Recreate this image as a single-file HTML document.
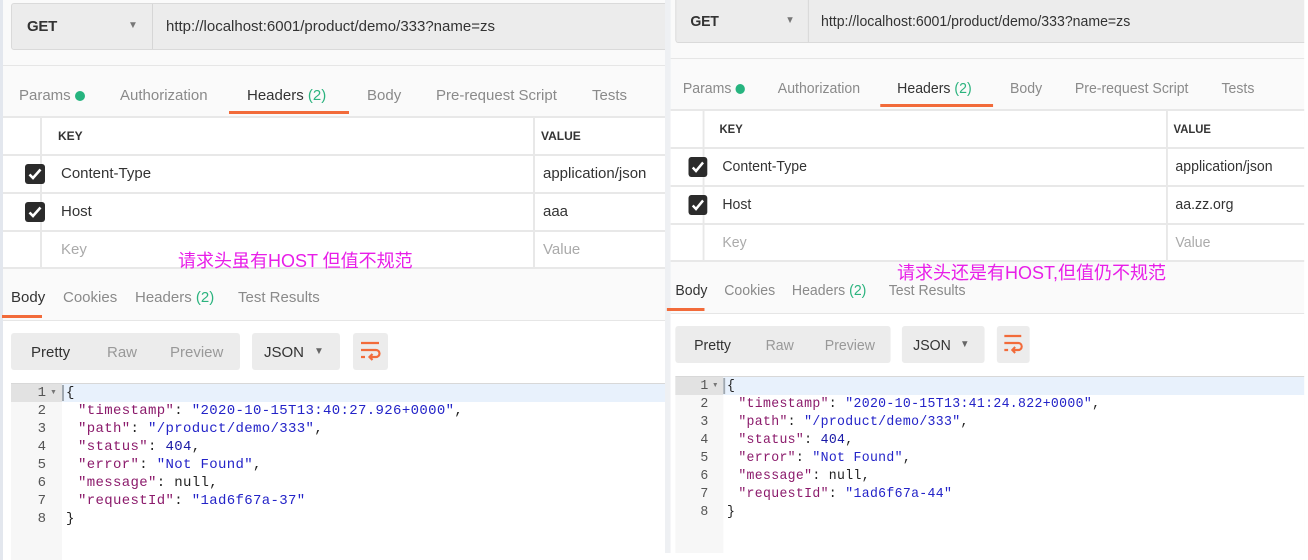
<!DOCTYPE html>
<html><head><meta charset="utf-8"><style>
*{margin:0;padding:0;box-sizing:border-box}
body{width:1308px;height:539px;overflow:hidden;background:#fff;position:relative;font-family:"Liberation Sans","Noto Sans CJK SC",sans-serif}
.p{position:absolute;top:0;height:560px;overflow:hidden;background:#fafafa}
.p div,.p span{position:absolute;white-space:nowrap}
.url{top:3px;left:11px;height:47px;background:#ececec;border:1px solid #dadada;border-radius:3px}
.t{font-size:15px;color:#8a8a8a;line-height:20px}
.d{color:#2bb37e}
.ul{background:#f26b3a;height:3px}
.hl{height:2px;background:#e8e8e8}
.cb{width:20px;height:20px;background:#2b2b2b;border-radius:3px}
.cb svg{position:absolute;left:3px;top:4px}
.rt{font-size:15px;color:#333;line-height:20px}
.ph{font-size:15px;color:#aaa;line-height:20px}
.kh{font-size:12px;font-weight:bold;color:#333}
.box{background:#ececec;border-radius:3px;height:37px}
.code{font-family:"Liberation Mono",monospace;font-size:14px;letter-spacing:0.35px;line-height:18px}
.code i{display:inline-block;width:12px}
.ln{color:#555;font-family:"Liberation Mono",monospace;font-size:14px;line-height:18px;text-align:right;width:36px}
.k{color:#8b1a6b}.s{color:#2323c8}.n{color:#1a1aa6}
.ann{position:absolute;color:#e81ee8;font-size:18px;font-family:"Liberation Sans","Noto Sans CJK SC",sans-serif;white-space:nowrap}
</style></head><body>

<!-- LEFT PANEL -->
<div class="p" style="left:0;width:665px">
 <div style="left:0;top:0;width:3px;height:560px;background:#e3e7ee"></div>
 <div class="url" style="width:680px"></div>
 <div style="left:152px;top:4px;width:1px;height:45px;background:#d6d6d6"></div>
 <div style="left:27px;top:18px;font-size:15px;color:#333;font-weight:bold;letter-spacing:-0.3px">GET</div>
 <div style="left:128px;top:20px;font-size:10px;color:#777">▼</div>
 <div style="left:166px;top:18px;font-size:15px;color:#333">http://localhost:6001/product/demo/333?name=zs</div>
 <div style="left:3px;top:65px;width:700px;height:1px;background:#e6e6e6"></div>
 <div class="t" style="left:19px;top:86px">Params</div>
 <div style="left:75px;top:91px;width:10px;height:10px;border-radius:5px;background:#26b47f"></div>
 <div class="t" style="left:120px;top:86px">Authorization</div>
 <div class="t" style="left:247px;top:86px;color:#333">Headers <span class="d" style="position:static">(2)</span></div>
 <div class="t" style="left:367px;top:86px">Body</div>
 <div class="t" style="left:436px;top:86px">Pre-request Script</div>
 <div class="t" style="left:592px;top:86px">Tests</div>
 <div class="ul" style="left:229px;top:111px;width:120px"></div>
 <div style="left:3px;top:117px;width:700px;height:151px;background:#fff"></div>
 <div class="hl" style="left:3px;top:116px;width:700px"></div>
 <div class="hl" style="left:3px;top:154px;width:700px"></div>
 <div class="hl" style="left:3px;top:192px;width:700px"></div>
 <div class="hl" style="left:3px;top:230px;width:700px"></div>
 <div class="hl" style="left:3px;top:267px;width:700px"></div>
 <div style="left:40px;top:117px;width:2px;height:151px;background:#e8e8e8"></div>
 <div style="left:533px;top:117px;width:2px;height:151px;background:#e8e8e8"></div>
 <div class="kh" style="left:58px;top:129px">KEY</div>
 <div class="kh" style="left:541px;top:129px">VALUE</div>
 <div class="cb" style="left:25px;top:164px"><svg width="14" height="12" viewBox="0 0 14 12"><path d="M1.5 6.5L5 10L12.5 1.5" stroke="#fff" stroke-width="2.6" fill="none"/></svg></div>
 <div class="cb" style="left:25px;top:202px"><svg width="14" height="12" viewBox="0 0 14 12"><path d="M1.5 6.5L5 10L12.5 1.5" stroke="#fff" stroke-width="2.6" fill="none"/></svg></div>
 <div class="rt" style="left:61px;top:164px">Content-Type</div>
 <div class="rt" style="left:543px;top:164px">application/json</div>
 <div class="rt" style="left:61px;top:202px">Host</div>
 <div class="rt" style="left:543px;top:202px">aaa</div>
 <div class="ph" style="left:61px;top:240px">Key</div>
 <div class="ph" style="left:543px;top:240px">Value</div>
 <div class="t" style="left:11px;top:288px;color:#333">Body</div>
 <div class="t" style="left:63px;top:288px">Cookies</div>
 <div class="t" style="left:135px;top:288px">Headers <span class="d" style="position:static">(2)</span></div>
 <div class="t" style="left:238px;top:288px">Test Results</div>
 <div class="ul" style="left:2px;top:315px;width:40px"></div>
 <div style="left:3px;top:320px;width:700px;height:240px;background:#fff;border-top:1px solid #e6e6e6"></div>
 <div class="box" style="left:11px;top:333px;width:229px"></div>
 <div class="t" style="left:31px;top:343px;color:#333">Pretty</div>
 <div class="t" style="left:107px;top:343px;color:#999">Raw</div>
 <div class="t" style="left:170px;top:343px;color:#999">Preview</div>
 <div class="box" style="left:252px;top:333px;width:88px"></div>
 <div class="t" style="left:264px;top:343px;color:#333">JSON</div>
 <div style="left:314px;top:346px;font-size:10px;color:#666">▼</div>
 <div class="box" style="left:353px;top:333px;width:35px"></div>
 <div style="left:360px;top:341px"><svg width="21" height="20" viewBox="0 0 21 20"><path d="M1 2H19M1 9H16a3.5 3.5 0 0 1 0 7H10M12.5 13L9.5 16L12.5 19M1 16H5" stroke="#f26b3a" stroke-width="2.2" fill="none"/></svg></div>
 <div style="left:11px;top:383px;width:700px;height:1px;background:#d8d8d8"></div>
 <div style="left:11px;top:384px;width:51px;height:200px;background:#f7f7f7"></div>
 <div style="left:11px;top:384px;width:51px;height:18px;background:#e2e2e2"></div>
 <div style="left:62px;top:384px;width:700px;height:18px;background:#e8f1fc"></div>
 <div style="left:62px;top:385px;width:2px;height:16px;background:#a0a8b0"></div>
 <div class="ln" style="left:10px;top:384px">1<br>2<br>3<br>4<br>5<br>6<br>7<br>8</div>
 <div style="left:50px;top:385px;font-size:7px;color:#777;line-height:16px">▼</div>
 <div class="code" style="left:66px;top:384px;color:#222">{<br><i></i><span class="k" style="position:static">"timestamp"</span>: <span class="s" style="position:static">"2020-10-15T13:40:27.926+0000"</span>,<br><i></i><span class="k" style="position:static">"path"</span>: <span class="s" style="position:static">"/product/demo/333"</span>,<br><i></i><span class="k" style="position:static">"status"</span>: <span class="n" style="position:static">404</span>,<br><i></i><span class="k" style="position:static">"error"</span>: <span class="s" style="position:static">"Not Found"</span>,<br><i></i><span class="k" style="position:static">"message"</span>: null,<br><i></i><span class="k" style="position:static">"requestId"</span>: <span class="s" style="position:static">"1ad6f67a-37"</span><br>}</div>
</div>

<!-- RIGHT PANEL (scaled) -->
<div class="p" style="left:665px;width:680px;transform-origin:0 0;transform:translateY(-7px) scaleX(0.94)">
 <div style="left:0;top:0;width:6px;height:560px;background:#eef0f3"></div>
 <div class="url" style="width:680px"></div>
 <div style="left:152px;top:4px;width:1px;height:45px;background:#d6d6d6"></div>
 <div style="left:27px;top:20px;font-size:15px;color:#333;font-weight:bold;letter-spacing:-0.3px">GET</div>
 <div style="left:128px;top:22px;font-size:10px;color:#777">▼</div>
 <div style="left:166px;top:20px;font-size:15px;color:#333">http://localhost:6001/product/demo/333?name=zs</div>
 <div style="left:6px;top:65px;width:700px;height:1px;background:#e6e6e6"></div>
 <div class="t" style="left:19px;top:86px">Params</div>
 <div style="left:75px;top:91px;width:10px;height:10px;border-radius:5px;background:#26b47f"></div>
 <div class="t" style="left:120px;top:86px">Authorization</div>
 <div class="t" style="left:247px;top:86px;color:#333">Headers <span class="d" style="position:static">(2)</span></div>
 <div class="t" style="left:367px;top:86px">Body</div>
 <div class="t" style="left:436px;top:86px">Pre-request Script</div>
 <div class="t" style="left:592px;top:86px">Tests</div>
 <div class="ul" style="left:229px;top:111px;width:120px"></div>
 <div style="left:6px;top:117px;width:700px;height:151px;background:#fff"></div>
 <div class="hl" style="left:6px;top:116px;width:700px"></div>
 <div class="hl" style="left:6px;top:154px;width:700px"></div>
 <div class="hl" style="left:6px;top:192px;width:700px"></div>
 <div class="hl" style="left:6px;top:230px;width:700px"></div>
 <div class="hl" style="left:6px;top:267px;width:700px"></div>
 <div style="left:40px;top:117px;width:2px;height:151px;background:#e8e8e8"></div>
 <div style="left:533px;top:117px;width:2px;height:151px;background:#e8e8e8"></div>
 <div class="kh" style="left:58px;top:129px">KEY</div>
 <div class="kh" style="left:541px;top:129px">VALUE</div>
 <div class="cb" style="left:25px;top:164px"><svg width="14" height="12" viewBox="0 0 14 12"><path d="M1.5 6.5L5 10L12.5 1.5" stroke="#fff" stroke-width="2.6" fill="none"/></svg></div>
 <div class="cb" style="left:25px;top:202px"><svg width="14" height="12" viewBox="0 0 14 12"><path d="M1.5 6.5L5 10L12.5 1.5" stroke="#fff" stroke-width="2.6" fill="none"/></svg></div>
 <div class="rt" style="left:61px;top:164px">Content-Type</div>
 <div class="rt" style="left:543px;top:164px">application/json</div>
 <div class="rt" style="left:61px;top:202px">Host</div>
 <div class="rt" style="left:543px;top:202px">aa.zz.org</div>
 <div class="ph" style="left:61px;top:240px">Key</div>
 <div class="ph" style="left:543px;top:240px">Value</div>
 <div class="t" style="left:11px;top:288px;color:#333">Body</div>
 <div class="t" style="left:63px;top:288px">Cookies</div>
 <div class="t" style="left:135px;top:288px">Headers <span class="d" style="position:static">(2)</span></div>
 <div class="t" style="left:238px;top:288px">Test Results</div>
 <div class="ul" style="left:2px;top:315px;width:40px"></div>
 <div style="left:6px;top:320px;width:700px;height:240px;background:#fff;border-top:1px solid #e6e6e6"></div>
 <div class="box" style="left:11px;top:333px;width:229px"></div>
 <div class="t" style="left:31px;top:343px;color:#333">Pretty</div>
 <div class="t" style="left:107px;top:343px;color:#999">Raw</div>
 <div class="t" style="left:170px;top:343px;color:#999">Preview</div>
 <div class="box" style="left:252px;top:333px;width:88px"></div>
 <div class="t" style="left:264px;top:343px;color:#333">JSON</div>
 <div style="left:314px;top:346px;font-size:10px;color:#666">▼</div>
 <div class="box" style="left:353px;top:333px;width:35px"></div>
 <div style="left:360px;top:341px"><svg width="21" height="20" viewBox="0 0 21 20"><path d="M1 2H19M1 9H16a3.5 3.5 0 0 1 0 7H10M12.5 13L9.5 16L12.5 19M1 16H5" stroke="#f26b3a" stroke-width="2.2" fill="none"/></svg></div>
 <div style="left:11px;top:383px;width:700px;height:1px;background:#d8d8d8"></div>
 <div style="left:11px;top:384px;width:51px;height:200px;background:#f7f7f7"></div>
 <div style="left:11px;top:384px;width:51px;height:18px;background:#e2e2e2"></div>
 <div style="left:62px;top:384px;width:700px;height:18px;background:#e8f1fc"></div>
 <div style="left:62px;top:385px;width:2px;height:16px;background:#a0a8b0"></div>
 <div class="ln" style="left:10px;top:384px">1<br>2<br>3<br>4<br>5<br>6<br>7<br>8</div>
 <div style="left:50px;top:385px;font-size:7px;color:#777;line-height:16px">▼</div>
 <div class="code" style="left:66px;top:384px;color:#222">{<br><i></i><span class="k" style="position:static">"timestamp"</span>: <span class="s" style="position:static">"2020-10-15T13:41:24.822+0000"</span>,<br><i></i><span class="k" style="position:static">"path"</span>: <span class="s" style="position:static">"/product/demo/333"</span>,<br><i></i><span class="k" style="position:static">"status"</span>: <span class="n" style="position:static">404</span>,<br><i></i><span class="k" style="position:static">"error"</span>: <span class="s" style="position:static">"Not Found"</span>,<br><i></i><span class="k" style="position:static">"message"</span>: null,<br><i></i><span class="k" style="position:static">"requestId"</span>: <span class="s" style="position:static">"1ad6f67a-44"</span><br>}</div>
</div>

<div class="ann" style="left:178px;top:247px">请求头虽有HOST 但值不规范</div>
<div class="ann" style="left:897px;top:259px">请求头还是有HOST,但值仍不规范</div>
</body></html>
